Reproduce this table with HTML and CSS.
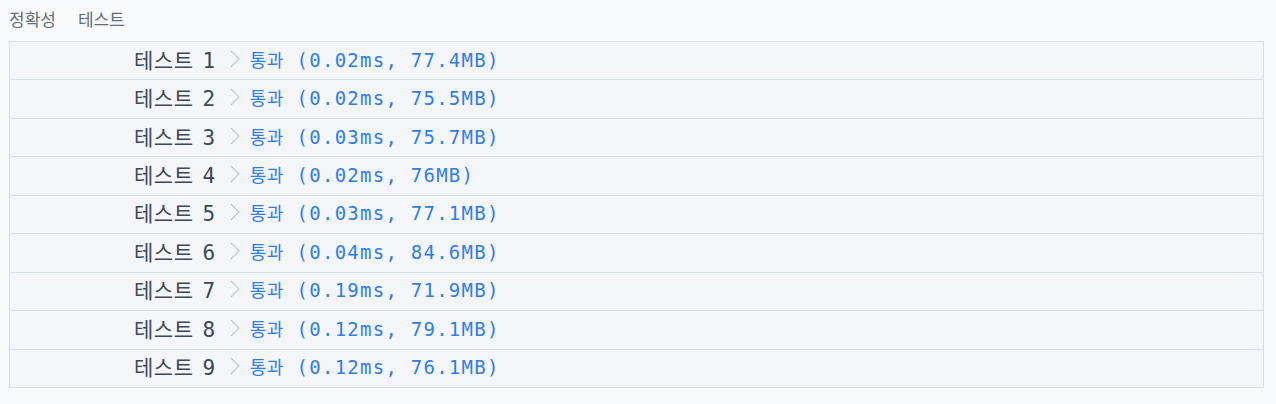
FILE: index.html
```html
<!DOCTYPE html>
<html lang="ko">
<head>
  <meta charset="UTF-8">
  <title>채점 결과</title>
  <link rel="stylesheet" href="styles.css">
</head>
<body>
  <div class="tabs">
    <span class="tab">정확성</span>
    <span class="tab">테스트</span>
  </div>

  <div class="results">
    <div class="row"><span class="name">테스트 1</span><svg class="arrow" viewBox="0 0 10 18"><polyline points="1,1 9,9 1,17"/></svg><span class="pass"><span class="verdict">통과</span> (0.02ms, 77.4MB)</span></div>
    <div class="row"><span class="name">테스트 2</span><svg class="arrow" viewBox="0 0 10 18"><polyline points="1,1 9,9 1,17"/></svg><span class="pass"><span class="verdict">통과</span> (0.02ms, 75.5MB)</span></div>
    <div class="row"><span class="name">테스트 3</span><svg class="arrow" viewBox="0 0 10 18"><polyline points="1,1 9,9 1,17"/></svg><span class="pass"><span class="verdict">통과</span> (0.03ms, 75.7MB)</span></div>
    <div class="row"><span class="name">테스트 4</span><svg class="arrow" viewBox="0 0 10 18"><polyline points="1,1 9,9 1,17"/></svg><span class="pass"><span class="verdict">통과</span> (0.02ms, 76MB)</span></div>
    <div class="row"><span class="name">테스트 5</span><svg class="arrow" viewBox="0 0 10 18"><polyline points="1,1 9,9 1,17"/></svg><span class="pass"><span class="verdict">통과</span> (0.03ms, 77.1MB)</span></div>
    <div class="row"><span class="name">테스트 6</span><svg class="arrow" viewBox="0 0 10 18"><polyline points="1,1 9,9 1,17"/></svg><span class="pass"><span class="verdict">통과</span> (0.04ms, 84.6MB)</span></div>
    <div class="row"><span class="name">테스트 7</span><svg class="arrow" viewBox="0 0 10 18"><polyline points="1,1 9,9 1,17"/></svg><span class="pass"><span class="verdict">통과</span> (0.19ms, 71.9MB)</span></div>
    <div class="row"><span class="name">테스트 8</span><svg class="arrow" viewBox="0 0 10 18"><polyline points="1,1 9,9 1,17"/></svg><span class="pass"><span class="verdict">통과</span> (0.12ms, 79.1MB)</span></div>
    <div class="row"><span class="name">테스트 9</span><svg class="arrow" viewBox="0 0 10 18"><polyline points="1,1 9,9 1,17"/></svg><span class="pass"><span class="verdict">통과</span> (0.12ms, 76.1MB)</span></div>
  </div>
</body>
</html>
```

FILE: styles.css
```css
:root {
  --page-bg: #f9fafc;
  --box-bg: #f5f6fa;
  --line: #d7dee6;
  --tab-color: #5f6e7c;
  --name-color: #3b4858;
  --pass-color: #2f7ee8;
  --arrow-color: #c3c9d1;
}

body {
  margin: 0;
  padding: 0 12px 0 9px;
  background: var(--page-bg);
  font-family: "Noto Sans CJK KR", "Noto Sans", sans-serif;
}

.tabs {
  display: flex;
  gap: 22px;
  align-items: center;
  height: 41px;
  padding-bottom: 4px;
  box-sizing: border-box;
}

.tab {
  font-size: 17px;
  color: var(--tab-color);
}

.results {
  background: var(--box-bg);
  border: 1px solid var(--line);
}

.row {
  display: flex;
  align-items: center;
  height: 38.44px;
  box-sizing: border-box;
  padding: 0 0 4px 124px;
  border-bottom: 1px solid var(--line);
  font-family: "DejaVu Sans Mono", "Noto Sans CJK KR", monospace;
  white-space: pre;
}

.row:last-child {
  border-bottom: none;
  height: 37.44px;
}

.name {
  font-size: 21px;
  letter-spacing: 0.5px;
  word-spacing: -4px;
  color: var(--name-color);
}

.arrow {
  width: 10px;
  height: 18px;
  margin: 0 10px 0 14px;
  fill: none;
  stroke: var(--arrow-color);
  stroke-width: 1.2;
}

.pass {
  font-size: 19px;
  letter-spacing: 1.25px;
  color: var(--pass-color);
}

.verdict {
  font-size: 18px;
  letter-spacing: 0.5px;
}
```
